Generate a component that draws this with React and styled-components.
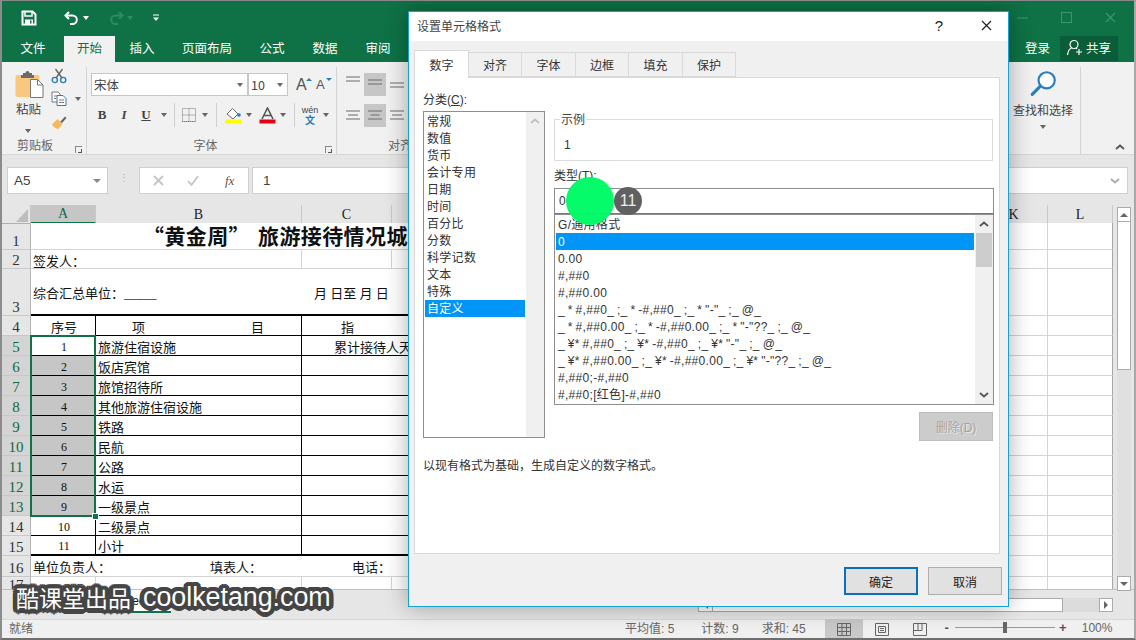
import React from 'react';
import styled, { createGlobalStyle } from 'styled-components';

const UI = '"Liberation Sans", "Noto Sans CJK SC", sans-serif';
const SHEET = '"Liberation Serif", "Noto Sans CJK SC", serif';
const GREEN = '#0e7246';
const LINE = '#d4d4d4';

const ring = Array.from({ length: 16 }, (_, i) => {
  const a = (i / 16) * Math.PI * 2;
  return `${(Math.cos(a) * 4.5).toFixed(2)}px ${(Math.sin(a) * 4.5).toFixed(2)}px 0.6px #454545, ${(Math.cos(a) * 2.5).toFixed(2)}px ${(Math.sin(a) * 2.5).toFixed(2)}px 0 #454545`;
}).join(', ');

const Global = createGlobalStyle`
  html, body { margin: 0; padding: 0; width: 1136px; height: 640px; overflow: hidden; background: #e6e6e6; }
  * { box-sizing: border-box; }
`;

const Frame = styled.div`
  position: relative; width: 1136px; height: 640px; overflow: hidden;
  display: flex; flex-direction: column;
  font: 12px ${UI}; color: #444; background: #e6e6e6;
  border-top: 1px solid #888; border-left: 2px solid #8c8c8c; border-right: 2px solid #a8a8a8; border-bottom: 2px solid #6f6f6f;
`;
const TitleBar = styled.div`
  height: 30px; background: ${GREEN}; display: flex; align-items: center; padding: 3px 0 0 19px; flex: none;
`;
const Qat = styled.div`
  display: flex; align-items: center; width: ${p => p.$w}px; color: ${p => p.$dim ? '#2f8a64' : '#fff'};
`;
const WindowButtons = styled.div`
  margin-left: auto; display: flex; align-items: center; gap: 33px; padding-right: 18px;
`;
const Tabs = styled.div`
  height: 31px; background: ${GREEN}; display: flex; align-items: flex-end; flex: none;
`;
const TabItem = styled.div`
  height: 26px; width: ${p => p.$w}px; margin-left: ${p => p.$ml || 0}px; display: flex; align-items: center; justify-content: center;
  font-size: 12.5px; color: ${p => p.$on ? GREEN : '#fff'}; background: ${p => p.$on ? '#f1f1f1' : 'transparent'}; flex: none; padding-bottom: 4px;
`;
const Login = styled.div`
  margin-left: auto; width: 60px; height: 26px; display: flex; align-items: center; color: #fff; font-size: 12.5px; padding: 0 0 4px 25px;
`;
const Share = styled.div`
  width: 58px; height: 25px; margin-right: 16px; background: #0a5d38; color: #fff; display: flex; align-items: center; gap: 3px;
  padding: 0 0 2px 6px; font-size: 12.5px; margin-bottom: 1px;
`;
const Ribbon = styled.div`
  height: 93px; background: #f1f1f1; display: flex; flex: none; border-bottom: 1px solid #d6d6d6; position: relative;
`;
const Group = styled.div`
  width: ${p => p.$w}px; flex: none; height: 87px; margin-top: 5px; border-right: ${p => p.$noline ? 'none' : '1px solid #d4d4d4'};
  display: flex; flex-direction: column; padding-left: ${p => p.$pl || 0}px; position: relative;
`;
const GroupBody = styled.div` height: 67px; display: flex; flex-direction: column; `;
const GroupLabel = styled.div`
  height: 20px; display: flex; align-items: center; justify-content: center; color: #666; font-size: 12px; padding-right: ${p => p.$pr || 0}px;
`;
const Launcher = styled.span`
  position: absolute; right: ${p => p.$r}px; bottom: 1px; width: 7px; height: 7px; border-left: 1px solid #888; border-top: 1px solid #888;
  &::after { content: ''; position: absolute; right: 0; bottom: 0; width: 3px; height: 3px; border-right: 1px solid #555; border-bottom: 1px solid #555; }
`;
const Caret = styled.span`
  display: inline-block; width: 0; height: 0; border-left: 3.5px solid transparent; border-right: 3.5px solid transparent;
  border-top: 4px solid #666; margin-left: ${p => p.$ml || 0}px; flex: none;
`;
const ClipRow = styled.div` display: flex; `;
const PasteCol = styled.div`
  width: 36px; margin-left: 13px; display: flex; flex-direction: column; align-items: flex-start; padding-top: 3px; font-size: 12.5px; color: #444;
`;
const PasteText = styled.div` margin-top: 2px; margin-left: 1px; line-height: 16px; `;
const PasteCaret = styled.div` margin: 4px 0 0 10px; `;
const ClipTools = styled.div` display: flex; flex-direction: column; gap: 2px; margin-top: -2px; `;
const ClipTool = styled.div` height: 21px; display: flex; align-items: center; `;
const FontTop = styled.div` display: flex; align-items: center; margin: 6px 0 0 4px; height: 23px; `;
const FontBox = styled.div`
  width: ${p => p.$w}px; height: 23px; background: #fff; border: 1px solid #c6c6c6; margin-left: ${p => p.$ml || 0}px; display: flex; align-items: center;
  justify-content: space-between; padding: 0 4px 0 2px; font-size: 12.5px; color: #444; flex: none;
  font-family: "Noto Sans CJK SC", sans-serif;
`;
const GrowA = styled.span`
  font: ${p => p.$s}px ${UI}; color: #555; margin-left: ${p => p.$ml}px; width: 13px; display: inline-block; line-height: 20px; position: relative;
  &::after {
    content: ''; position: absolute; right: -3px; top: 3px; width: 0; height: 0; border-left: 3px solid transparent; border-right: 3px solid transparent;
    ${p => p.$down ? 'border-top: 3px solid #2a7fb8;' : 'border-bottom: 3px solid #2a7fb8;'}
  }
`;
const FontBottom = styled.div` display: flex; align-items: center; margin: 7px 0 0 4px; height: 24px; `;
const Slot = styled.span`
  width: ${p => p.$w}px; flex: none; display: flex; align-items: center; justify-content: center;
`;
const StyleGlyph = styled.span`
  font: ${p => p.$i ? 'italic' : ''} bold 13px "Liberation Serif", serif; color: #444; ${p => p.$u && 'text-decoration: underline;'}
`;
const Sep = styled.span` width: 1px; height: 24px; background: #d0d0d0; flex: none; margin: 0 ${p => p.$m || 0}px; `;
const AlignRow = styled.div` display: flex; margin: ${p => p.$mt}px 0 0 3px; `;
const AlignCell = styled.div`
  width: 22px; height: 23px; margin-right: ${p => p.$mr || 0}px; background: ${p => p.$on ? '#c6c6c6' : 'transparent'}; display: flex;
  align-items: ${p => p.$v || 'center'}; justify-content: center; flex: none; padding: 3px 0;
`;
const AlignLabel = styled(GroupLabel)` padding-left: ${p => p.$offset}px; justify-content: flex-start; `;
const Spacer = styled.div` flex: 1; `;
const FindCol = styled.div`
  display: flex; flex-direction: column; align-items: center; padding: 3px 0 0 7px; font-size: 12px; color: #444; line-height: 16px; gap: 6px;
`;
const CollapseBtn = styled.div` position: absolute; right: 9px; bottom: 4px; color: #555; display: flex; `;

const FormulaRow = styled.div`
  height: 50px; flex: none; display: flex; align-items: flex-start; padding: 12px 0 0 5px; background: #e6e6e6;
`;
const NameBox = styled.div`
  width: 101px; height: 27px; background: #fff; border: 1px solid #d0d0d0; display: flex; align-items: center; justify-content: space-between;
  padding: 0 6px; font-size: 13.5px; color: #444; flex: none;
`;
const Dots = styled.div` width: 31px; text-align: center; color: #aaa; font-size: 10px; line-height: 5px; letter-spacing: 0; flex: none; padding-top: 8px; `;
const FxBox = styled.div`
  width: 110px; height: 27px; background: #fff; border: 1px solid #d0d0d0; display: flex; align-items: center; gap: 23px; padding-left: 13px; flex: none; color: #bbb;
`;
const Fx = styled.span` font: italic 13px "Liberation Serif", serif; color: #555; margin-left: 3px; `;
const FormulaInput = styled.div`
  width: 876px; height: 27px; background: #fff; border: 1px solid #d0d0d0; margin-left: 3px; display: flex; align-items: center; justify-content: space-between; padding: 0 7px 0 10px;
  font-size: 13.5px; color: #444; flex: none;
`;

const COLS = '29px 65px 206px 90px 588px 68px 65px';
const SheetArea = styled.div` position: relative; display: flex; flex: none; height: 384px; `;
const SheetMain = styled.div` width: 1111px; flex: none; position: relative; `;
const HeadRow = styled.div` display: grid; grid-template-columns: ${COLS}; height: 18px; `;
const Corner = styled.div`
  background: #e6e6e6; border-right: 1px solid #c8c8c8; border-bottom: 1px solid #b0b0b0; position: relative;
  &::after { content: ''; position: absolute; right: 2px; bottom: 1px; width: 0; height: 0; border-left: 12px solid transparent; border-bottom: 13px solid #bdbdbd; }
`;
const ColHead = styled.div`
  background: ${p => p.$sel ? '#c6c6c6' : '#e6e6e6'}; color: ${p => p.$sel ? '#0f6a42' : '#222'}; font: 14px ${SHEET}; display: flex; align-items: center; justify-content: center;
  border-right: 1px solid #c8c8c8; border-bottom: ${p => p.$sel ? `2px solid ${GREEN}` : '1px solid #a8a8a8'}; padding-top: 1px;
`;
const Row = styled.div` display: grid; grid-template-columns: ${COLS}; height: ${p => p.$h}px; `;
const RowHead = styled.div`
  background: ${p => p.$sel ? '#d4d4d4' : '#e6e6e6'}; color: ${p => p.$sel ? '#0f6a42' : '#333'}; font: 15px "Liberation Serif", serif;
  display: flex; align-items: flex-end; justify-content: center; border-right: 1px solid #b4b4b4; border-bottom: 1px solid #c8c8c8; line-height: 16px;
`;
const Cell = styled.div`
  grid-column: span ${p => p.$span || 1}; background: ${p => p.$sel ? '#c6c6c6' : '#fff'};
  border-right: ${p => p.$nr ? 'none' : `1px solid ${p.$black ? '#000' : LINE}`};
  border-bottom: ${p => p.$bb || 1}px solid ${p => p.$black || p.$bb ? '#000' : LINE};
  font: 13px/1 ${SHEET}; color: #111; display: flex; align-items: ${p => p.$end ? 'flex-end' : 'center'}; white-space: pre; padding-left: ${p => p.$pl ?? 2}px;
  justify-content: ${p => p.$c ? 'center' : 'flex-start'}; min-width: 0; padding-top: ${p => p.$end ? 0 : 3}px;
  ${p => p.$lr && 'border-right: 1px solid #a8a8a8;'}
`;
const Num = styled.span` font: 12px "Liberation Serif", serif; `;
const TitleText = styled.span` font: bold 21px/1 "Noto Sans CJK SC", sans-serif; color: #111; letter-spacing: .4px; margin-top: -4px; `;
const TitleRest = styled.span` margin-left: 8px; `;
const FarMark = styled.span` margin-left: ${p => p.$ml}px; `;
const FootLabel = styled.span` width: ${p => p.$w}px; flex: none; `;
const Selection = styled.div`
  position: absolute; left: 28px; top: 130px; width: 66px; height: 182px; border: 2px solid ${GREEN}; pointer-events: none;
  &::after { content: ''; position: absolute; right: -4px; bottom: -4px; width: 5px; height: 5px; background: ${GREEN}; border: 0; outline: 1px solid #fff; }
`;
const VScroll = styled.div`
  width: 14px; margin-left: 4px; flex: none; display: flex; flex-direction: column; height: 386px; padding-top: 2px; position: relative; z-index: 1;
`;
const ScrollBtn = styled.div`
  width: 14px; height: 15px; background: #fff; border: 1px solid #ababab; display: flex; align-items: center; justify-content: center; flex: none;
`;
const ArrowUp = styled.span` width: 0; height: 0; border-left: 4px solid transparent; border-right: 4px solid transparent; border-bottom: 4px solid #666; `;
const ArrowDown = styled.span` width: 0; height: 0; border-left: 4px solid transparent; border-right: 4px solid transparent; border-top: 4px solid #666; `;
const ArrowRight = styled.span` width: 0; height: 0; border-top: 4px solid transparent; border-bottom: 4px solid transparent; border-left: 4px solid #666; `;
const ArrowLeft = styled.span` width: 0; height: 0; border-top: 4px solid transparent; border-bottom: 4px solid transparent; border-right: 4px solid #666; `;
const VThumb = styled.div` height: 148px; background: #fff; border: 1px solid #ababab; border-top: none; flex: none; `;
const VTrack = styled.div` flex: 1; background: #e0e0e0; `;
const SheetTabs = styled.div`
  height: 30px; background: #e6e6e6; border-top: 1px solid #c0c0c0; display: flex; align-items: flex-start; flex: none; position: relative; margin-top: 0;
`;
const SheetTab = styled.div`
  margin-left: 100px; width: 69px; height: 23px; background: #fff; border-bottom: 2px solid ${GREEN}; color: #111; display: flex; align-items: center; justify-content: center; font-size: 12px;
`;
const HScroll = styled.div`
  margin-left: auto; margin-right: 21px; margin-top: 8px; display: flex; align-items: stretch; height: 14px; width: 415px;
`;
const HThumb = styled.div` width: 350px; background: #fff; border: 1px solid #ababab; border-left: none; `;
const HTrack = styled.div` flex: 1; background: #dcdcdc; `;
const HBtn = styled.div` width: ${p => p.$w}px; background: #fff; border: 1px solid #ababab; display: flex; align-items: center; justify-content: center; flex: none; `;
const StatusBar = styled.div`
  height: 19px; background: #f0f0f0; flex: none; display: flex; align-items: center; padding: 0 0 3px 7px; color: #666; font-size: 12px; border-top: 1px solid #d8d8d8;
`;
const StatText = styled.span` margin-left: ${p => p.$ml}px; flex: none; white-space: nowrap; font-size: 12px; color: #666; `;
const ViewBtn = styled.span`
  width: 38px; height: 21px; flex: none; display: flex; align-items: center; justify-content: center; background: ${p => p.$on ? '#c8c8c8' : 'transparent'};
  margin: 0 0 -3px ${p => p.$ml || 0}px;
`;
const ZoomTrack = styled.span`
  width: 100px; height: 1px; background: #999; margin: 0 4px; position: relative; flex: none;
  &::after { content: ''; position: absolute; left: 48px; top: -5px; width: 4px; height: 11px; background: #666; }
`;
const ZoomSign = styled.span` font: bold 13px ${UI}; color: #555; margin-left: ${p => p.$ml || 0}px; flex: none; width: 8px; text-align: center; `;

/* dialog */
const Dialog = styled.div`
  position: absolute; left: 406px; top: 10px; width: 601px; height: 596px; background: #f0f0f0; border: 1px solid #18a0d0;
  box-shadow: 0 0 22px rgba(0,0,0,.32); display: flex; flex-direction: column; color: #333; font: 12px ${UI};
`;
const DlgTitle = styled.div`
  height: 29px; background: #fff; display: flex; align-items: center; padding: 0 0 3px 8px; font-size: 12px; color: #444; flex: none;
`;
const DlgHelp = styled.span` margin-left: auto; font: 15px ${UI}; color: #222; margin-right: 38px; `;
const DlgClose = styled.span` margin-right: 16px; display: flex; `;
const DlgTabs = styled.div`
  display: flex; align-items: flex-end; height: 27px; margin: 9px 0 0 5px; flex: none; position: relative; z-index: 1;
`;
const DlgTab = styled.div`
  width: ${p => p.$w}px; height: ${p => p.$on ? 28 : 25}px; background: ${p => p.$on ? '#fff' : '#f0f0f0'}; border: 1px solid #d9d9d9; border-left: ${p => p.$on ? '1px solid #d9d9d9' : 'none'};
  border-bottom: ${p => p.$on ? 'none' : '1px solid #d9d9d9'}; display: flex; align-items: center; justify-content: center; color: #333; flex: none;
  margin-bottom: ${p => p.$on ? -1 : 0}px; font-size: 12px;
`;
const Panel = styled.div`
  margin-left: 5px; width: 586px; height: 477px; background: #fff; border: 1px solid #d9d9d9; padding: 13px 0 0 8px; flex: none;
  display: flex; flex-direction: column;
`;
const Columns = styled.div` display: flex; `;
const LeftCol = styled.div` width: 122px; flex: none; `;
const RightCol = styled.div` width: 440px; margin-left: 9px; flex: none; `;
const FieldLabel = styled.div` height: 20px; line-height: 18px; color: #333; font-size: 12px; `;
const ListBox = styled.div`
  border: 1px solid #8e8e8e; background: #fff; display: flex; height: ${p => p.$h}px; position: relative;
`;
const ListInner = styled.div` flex: 1; padding: 1px 1px 0 1px; min-width: 0; `;
const ListItem = styled.div`
  height: 17px; line-height: 19px; padding-left: 2px; white-space: pre; background: ${p => p.$on ? '#0095f6' : 'transparent'}; color: ${p => p.$on ? '#fff' : '#333'};
  font-size: 12px; letter-spacing: .3px; word-spacing: -.8px; overflow: hidden;
`;
const ListScroll = styled.div`
  width: 18px; background: #f0f0f0; flex: none; display: flex; flex-direction: column; align-items: center; position: relative;
`;
const ScrollChevron = styled.div` height: 18px; display: flex; align-items: center; justify-content: center; color: ${p => p.$dim ? '#c0c0c0' : '#555'}; flex: none; `;
const Thumb = styled.div` width: 16px; height: 34px; background: #cdcdcd; flex: none; `;
const Fill = styled.div` flex: 1; `;
const Sample = styled.fieldset`
  margin: 28px 0 0 0; padding: 10px 0 0 9px; height: 42px; border: 1px solid #dcdcdc; width: 439px; position: relative; display: flex; align-items: center;
`;
const SampleLegend = styled.span`
  position: absolute; left: 5px; top: -7px; background: #fff; padding: 0 1px; font-size: 12px; line-height: 14px; color: #444;
`;
const TypeLabel = styled.div` height: 27px; line-height: 14px; padding-top: 8px; color: #333; font-size: 12px; `;
const TypeInput = styled.div`
  height: 26px; border: 1px solid #8e8e8e; border-bottom: 1px solid #777; background: #fff; padding-left: 4px; display: flex; align-items: center; font-size: 12px; color: #333;
`;
const DeleteRow = styled.div` display: flex; justify-content: flex-end; margin-top: 7px; padding-right: 1px; `;
const DisabledBtn = styled.div`
  width: 74px; height: 29px; background: #cccccc; border: 1px solid #bdbdbd; color: #a4a4a4; display: flex; align-items: center; justify-content: center; font-size: 12px;
  text-shadow: 1px 1px 0 #e8e8e8;
`;
const Desc = styled.div` margin-top: 17px; line-height: 16px; color: #333; font-size: 12px; `;
const DlgButtons = styled.div` display: flex; justify-content: flex-end; gap: 10px; padding: 13px 6px 0 0; `;
const DlgButton = styled.div`
  width: 74px; height: 28px; background: #e1e1e1; border: ${p => p.$primary ? '2px solid #0a6fbd' : '1px solid #adadad'}; display: flex; align-items: center; justify-content: center; font-size: 12px; color: #222;
`;
const Spot = styled.div`
  position: absolute; left: 564px; top: 176px; width: 48px; height: 48px; border-radius: 50%; background: #00fb66; opacity: .98;
`;
const StepBadge = styled.div`
  position: absolute; left: 612px; top: 186px; width: 28px; height: 28px; border-radius: 50%; background: #606060; color: #eee; font: 16px/28px ${UI}; text-align: center;
`;
const Watermark = styled.div`
  position: absolute; left: 14px; top: 581px; display: flex; align-items: center; gap: 12px; color: #fff; white-space: nowrap;
  text-shadow: ${ring};
`;
const WatermarkCn = styled.span` font: 23px/30px "Noto Sans CJK SC", sans-serif; `;
const WatermarkEn = styled.span` font: 26.8px/30px ${UI}; `;

const Icon = ({ w = 16, h = 16, children, vb, ...rest }) => (
  <svg width={w} height={h} viewBox={vb || `0 0 ${w} ${h}`} fill="none" {...rest}>{children}</svg>
);
const Save = () => (
  <Icon w={16} h={16}><path d="M1.5 1.5h10l3 3v10h-13z" stroke="#fff" strokeWidth="2" /><path d="M4 2v4h7V2" stroke="#fff" strokeWidth="1.5" /><rect x="4" y="9.5" width="8" height="5" fill="#fff" /><rect x="9" y="10.5" width="1.5" height="3" fill={GREEN} /></Icon>
);
const Undo = ({ c }) => (
  <Icon w={16} h={16}><path d="M5 2 1.5 5.5 5 9" stroke={c} strokeWidth="2" /><path d="M2 5.5h6.5a4.3 4.3 0 0 1 0 8.6H6" stroke={c} strokeWidth="2" /></Icon>
);
const Redo = ({ c }) => (
  <Icon w={16} h={16}><path d="M11 2l3.5 3.5L11 9" stroke={c} strokeWidth="2" /><path d="M14 5.5H7.5a4.3 4.3 0 0 0 0 8.6H10" stroke={c} strokeWidth="2" /></Icon>
);
const QatCaret = () => (
  <Icon w={8} h={8}><path d="M1 1h6" stroke="#fff" /><path d="M1 3.5h6L4 7z" fill="#fff" /></Icon>
);
const Paste = () => (
  <Icon w={29} h={30}><rect x="0.5" y="5" width="24" height="22" rx="2" fill="#f9c77e" /><path d="M8 5V3h2.5a2 2 0 0 1 4 0H17v2h2v3H6V5z" fill="#6b6b6b" /><path d="M15.5 9.5h7l5.5 5.5v12.5H15.5z" fill="#fff" stroke="#777" /><path d="M22.5 10v5H28" stroke="#777" /></Icon>
);
const Cut = () => (
  <Icon w={16} h={16}><circle cx="3.8" cy="12" r="2.6" stroke="#2a7fb8" strokeWidth="1.4" /><circle cx="12.2" cy="12" r="2.6" stroke="#2a7fb8" strokeWidth="1.4" /><path d="M5 10 11.5 1M11 10 4.5 1" stroke="#666" strokeWidth="1.4" /></Icon>
);
const CopyIc = () => (
  <Icon w={16} h={15}><path d="M1 1h6l2 2v8H1z" fill="#fff" stroke="#777" /><path d="M6 4.5h6l3 3v7H6z" fill="#fff" stroke="#2a7fb8" /><path d="M3 5h3M8 9h5M8 11.5h5M3 7.5h2" stroke="#777" /></Icon>
);
const Painter = () => (
  <Icon w={16} h={16}><path d="M9 8 14 2.5l1.5 1.5L11 9z" fill="#666" /><path d="M1 10.5 6.5 5l5 5-4 5c-3-.5-5.5-2-6.5-4.5z" fill="#f4b860" /></Icon>
);
const Borders = () => (
  <Icon w={14} h={14}><path d="M.5.5h13v13H.5zM7 .5v13M.5 7h13" stroke="#777" strokeDasharray="1 1" /><path d="M0 13.5h14" stroke="#777" strokeDasharray="1 1" /></Icon>
);
const Bucket = () => (
  <Icon w={18} h={18}><path d="M3 8 8.5 2.5 14 8l-5 5z" fill="#fff" stroke="#666" /><circle cx="15" cy="9" r="1.8" fill="#2a7fb8" /><rect x="1" y="13.5" width="16" height="4" fill="#ffff00" /></Icon>
);
const ColorA = () => (
  <Icon w={17} h={17}><path d="M3 12 8.5 1 14 12M5 8.5h7" stroke="#555" strokeWidth="1.6" /><rect x="0.5" y="12.5" width="16" height="4" fill="#e60012" /></Icon>
);
const Wen = styled.span` display: flex; flex-direction: column; align-items: center; font: 9px/9px ${UI}; color: #444; `;
const WenChar = styled.span` color: #2a7fb8; font: bold 10px/10px "Noto Sans CJK SC", sans-serif; `;
const AlignIc = ({ widths = [14, 14, 14], c = '#6a6a6a' }) => (
  <Icon w={14} h={11}>{widths.map((w, i) => <rect key={i} x={(14 - w) / 2} y={i * 4 + .5} width={w} height="1" fill={c} />)}</Icon>
);
const Search = () => (
  <Icon w={27} h={27} vb="0 0 30 30"><circle cx="18.5" cy="11.5" r="9" stroke="#2a7fb8" strokeWidth="2.4" fill="#fff" /><path d="M11.5 18 2.5 27" stroke="#2a7fb8" strokeWidth="3.5" strokeLinecap="round" /></Icon>
);
const Person = () => (
  <Icon w={17} h={17}><circle cx="8" cy="5.5" r="4" stroke="#fff" strokeWidth="1.2" /><path d="M1.5 16c.5-4 2.5-6.5 4.5-7.2M10 9l1 1" stroke="#fff" strokeWidth="1.2" /><path d="M13 10v6M10 13h6" stroke="#fff" strokeWidth="1.2" /></Icon>
);
const Cross = ({ s = 12, c = '#222', sw = 1.2 }) => (
  <Icon w={s} h={s}><path d={`M1 1 ${s - 1} ${s - 1}M${s - 1} 1 1 ${s - 1}`} stroke={c} strokeWidth={sw} /></Icon>
);
const Chevron = ({ up, c = 'currentColor' }) => (
  <Icon w={10} h={6}><path d={up ? 'M1 5 5 1.5 9 5' : 'M1 1 5 4.5 9 1'} stroke={c} strokeWidth="1.8" /></Icon>
);
const GridIc = () => (
  <Icon w={14} h={13}><path d="M.5.5h13v12H.5zM.5 4.5h13M.5 8.5h13M5 .5v12M9.5.5v12" stroke="#666" /></Icon>
);
const PageIc = () => (
  <Icon w={14} h={13}><path d="M.5.5h13v12H.5zM3.5 3.5h7v6h-7zM5 5.5h4M5 7.5h4" stroke="#666" /></Icon>
);
const BreakIc = () => (
  <Icon w={14} h={13}><path d="M.5.5h13v12H.5zM5 .5v7h4V.5M.5 7.5H5" stroke="#666" /></Icon>
);

const tabs = [['开始', 51], ['插入', 54], ['页面布局', 76], ['公式', 54], ['数据', 52], ['审阅', 54]];
const labels = ['常规', '数值', '货币', '会计专用', '日期', '时间', '百分比', '分数', '科学记数', '文本', '特殊', '自定义'];
const formats = [
  'G/通用格式', '0', '0.00', '#,##0', '#,##0.00',
  '_ * #,##0_ ;_ * -#,##0_ ;_ * "-"_ ;_ @_',
  '_ * #,##0.00_ ;_ * -#,##0.00_ ;_ * "-"??_ ;_ @_',
  '_ ¥* #,##0_ ;_ ¥* -#,##0_ ;_ ¥* "-"_ ;_ @_',
  '_ ¥* #,##0.00_ ;_ ¥* -#,##0.00_ ;_ ¥* "-"??_ ;_ @_',
  '#,##0;-#,##0', '#,##0;[红色]-#,##0',
];
const items = ['旅游住宿设施', '饭店宾馆', '旅馆招待所', '其他旅游住宿设施', '铁路', '民航', '公路', '水运', '一级景点', '二级景点', '小计'];
const dlgTabs = [['数字', 55, true], ['对齐', 53], ['字体', 54], ['边框', 53], ['填充', 54], ['保护', 53]];
const colHeads = ['A', 'B', 'C', '', 'K', 'L'];

function Sheet() {
  return (
    <SheetMain>
      <HeadRow>
        <Corner />
        {colHeads.map((c, i) => <ColHead key={i} $sel={c === 'A'}>{c}</ColHead>)}
      </HeadRow>
      <Row $h={27}>
        <RowHead>1</RowHead>
        <Cell $span={4} $pl={112} $nr><TitleText lang="zh-CN">“黄金周”<TitleRest>旅游接待情况城市汇总表</TitleRest></TitleText></Cell>
        <Cell />
        <Cell $lr />
      </Row>
      <Row $h={19}>
        <RowHead>2</RowHead>
        <Cell $span={2} $end>签发人：</Cell>
        <Cell /><Cell /><Cell /><Cell $lr />
      </Row>
      <Row $h={47}>
        <RowHead>3</RowHead>
        <Cell $span={2} $nr $bb={2} $black>综合汇总单位：_____</Cell>
        <Cell $span={2} $bb={2} $nr $black $pl={12}>月 日至 月 日</Cell>
        <Cell />
        <Cell $lr />
      </Row>
      <Row $h={20}>
        <RowHead>4</RowHead>
        <Cell $black $c>序号</Cell>
        <Cell $black $pl={36}>项<FarMark $ml={106}>目</FarMark></Cell>
        <Cell $black $span={2} $pl={39} $nr>指</Cell>
        <Cell /><Cell $lr />
      </Row>
      {items.map((t, i) => {
        const n = i + 1;
        const sel = n <= 9;
        const last = n === 11;
        return (
          <Row $h={20} key={n}>
            <RowHead $sel={sel}>{n + 4}</RowHead>
            <Cell $black $c $sel={sel && n > 1} $bb={last ? 2 : 1}><Num>{n}</Num></Cell>
            <Cell $black $bb={last ? 2 : 1}>{t}</Cell>
            <Cell $black $span={2} $nr $bb={last ? 2 : 1} $pl={32}>{n === 1 ? '累计接待人天' : ''}</Cell>
            <Cell /><Cell $lr />
          </Row>
        );
      })}
      <Row $h={21}>
        <RowHead>16</RowHead>
        <Cell $span={3} $nr><FootLabel $w={177}>单位负责人：</FootLabel><FootLabel $w={142}>填表人：</FootLabel>电话：</Cell>
        <Cell /><Cell /><Cell $lr />
      </Row>
      <Row $h={12}>
        <RowHead>17</RowHead>
        <Cell /><Cell /><Cell /><Cell /><Cell /><Cell $lr />
      </Row>
      <Selection />
    </SheetMain>
  );
}

function FormatDialog() {
  return (
    <Dialog>
      <DlgTitle>
        设置单元格格式
        <DlgHelp>?</DlgHelp>
        <DlgClose><Cross s={11} /></DlgClose>
      </DlgTitle>
      <DlgTabs>
        {dlgTabs.map(([t, w, on]) => <DlgTab key={t} $w={w} $on={on}>{t}</DlgTab>)}
      </DlgTabs>
      <Panel>
        <Columns>
          <LeftCol>
            <FieldLabel>分类(<u>C</u>):</FieldLabel>
            <ListBox $h={327}>
              <ListInner>
                {labels.map(l => <ListItem key={l} $on={l === '自定义'}>{l}</ListItem>)}
              </ListInner>
              <ListScroll><ScrollChevron $dim><Chevron up /></ScrollChevron></ListScroll>
            </ListBox>
          </LeftCol>
          <RightCol>
            <Sample>
              <SampleLegend>示例</SampleLegend>
              1
            </Sample>
            <TypeLabel>类型(<u>T</u>):</TypeLabel>
            <TypeInput>0</TypeInput>
            <ListBox $h={191}>
              <ListInner>
                {formats.map(f => <ListItem key={f} $on={f === '0'}>{f}</ListItem>)}
              </ListInner>
              <ListScroll>
                <ScrollChevron><Chevron up /></ScrollChevron>
                <Thumb />
                <Fill />
                <ScrollChevron><Chevron /></ScrollChevron>
              </ListScroll>
            </ListBox>
            <DeleteRow><DisabledBtn>删除(D)</DisabledBtn></DeleteRow>
          </RightCol>
        </Columns>
        <Desc>以现有格式为基础，生成自定义的数字格式。</Desc>
      </Panel>
      <DlgButtons>
        <DlgButton $primary>确定</DlgButton>
        <DlgButton>取消</DlgButton>
      </DlgButtons>
    </Dialog>
  );
}

export default function App() {
  return (
    <>
      <Global />
      <Frame>
        <TitleBar>
          <Qat $w={43}><Save /></Qat>
          <Qat $w={44}><Undo c="#fff" /><Caret $ml={3} style={{ borderTopColor: '#fff' }} /></Qat>
          <Qat $w={44}><Redo c="#2f8a64" /><Caret $ml={3} style={{ borderTopColor: '#2f8a64' }} /></Qat>
          <Qat $w={20}><QatCaret /></Qat>
          <WindowButtons>
            <Icon w={11} h={11}><path d="M0 6h11" stroke="#3d9470" /></Icon>
            <Icon w={11} h={11}><rect x=".5" y=".5" width="10" height="10" stroke="#3d9470" /></Icon>
            <Cross s={11} c="#3d9470" />
          </WindowButtons>
        </TitleBar>
        <Tabs>
          <TabItem $w={62}>文件</TabItem>
          {tabs.map(([t, w]) => <TabItem key={t} $w={w} $on={t === '开始'}>{t}</TabItem>)}
          <Login>登录</Login>
          <Share><Person />共享</Share>
        </Tabs>
        <Ribbon>
          <Group $w={85}>
            <GroupBody>
              <ClipRow>
                <PasteCol>
                  <Paste />
                  <PasteText>粘贴</PasteText>
                  <PasteCaret><Caret /></PasteCaret>
                </PasteCol>
                <ClipTools>
                  <ClipTool><Cut /></ClipTool>
                  <ClipTool><CopyIc /><Caret $ml={8} /></ClipTool>
                  <ClipTool><Painter /></ClipTool>
                </ClipTools>
              </ClipRow>
            </GroupBody>
            <GroupLabel $pr={18}>剪贴板</GroupLabel>
            <Launcher $r={4} />
          </Group>
          <Group $w={250}>
            <GroupBody>
              <FontTop>
                <FontBox $w={157}>宋体<Caret /></FontBox>
                <FontBox $w={40}>10<Caret /></FontBox>
                <GrowA $s={16} $ml={8}>A</GrowA>
                <GrowA $s={13} $ml={7} $down>A</GrowA>
              </FontTop>
              <FontBottom>
                <Slot $w={22}><StyleGlyph>B</StyleGlyph></Slot>
                <Slot $w={22}><StyleGlyph $i>I</StyleGlyph></Slot>
                <Slot $w={22}><StyleGlyph $u>U</StyleGlyph></Slot>
                <Slot $w={14}><Caret /></Slot>
                <Sep $m={3} />
                <Slot $w={22}><Borders /></Slot>
                <Slot $w={10}><Caret /></Slot>
                <Sep $m={6} />
                <Slot $w={20}><Bucket /></Slot>
                <Slot $w={12}><Caret /></Slot>
                <Slot $w={24}><ColorA /></Slot>
                <Slot $w={8}><Caret /></Slot>
                <Sep $m={7} />
                <Slot $w={16}><Wen>wén<WenChar>文</WenChar></Wen></Slot>
                <Slot $w={16}><Caret /></Slot>
              </FontBottom>
            </GroupBody>
            <GroupLabel $pr={12}>字体</GroupLabel>
            <Launcher $r={4} />
          </Group>
          <Group $w={150} $noline $pl={2}>
            <GroupBody>
              <AlignRow $mt={6}>
                <AlignCell $v="flex-start"><AlignIc widths={[14, 14]} /></AlignCell>
                <AlignCell $on><AlignIc widths={[14, 14]} /></AlignCell>
                <AlignCell $v="flex-end"><AlignIc widths={[14, 14]} /></AlignCell>
              </AlignRow>
              <AlignRow $mt={8}>
                <AlignCell><AlignIc widths={[14, 10, 14]} /></AlignCell>
                <AlignCell $on><AlignIc widths={[14, 9, 14]} /></AlignCell>
                <AlignCell><AlignIc widths={[14, 10, 14]} /></AlignCell>
              </AlignRow>
            </GroupBody>
            <AlignLabel $offset={49}>对齐方式</AlignLabel>
          </Group>
          <Spacer />
          <Group $w={82}>
            <GroupBody>
              <FindCol>
                <Search />
                查找和选择
                <Caret />
              </FindCol>
            </GroupBody>
          </Group>
          <Group $w={53} $noline />
          <CollapseBtn><Chevron up c="#555" /></CollapseBtn>
        </Ribbon>
        <FormulaRow>
          <NameBox>A5<Caret style={{ borderTopColor: '#888', borderLeftWidth: 4, borderRightWidth: 4 }} /></NameBox>
          <Dots>⋮</Dots>
          <FxBox>
            <Cross s={11} c="#c4c4c4" sw={1.8} />
            <Icon w={12} h={11}><path d="M1 6l3.5 4L11 1" stroke="#c4c4c4" strokeWidth="1.8" /></Icon>
            <Fx>fx</Fx>
          </FxBox>
          <FormulaInput>1<Chevron c="#aaa" /></FormulaInput>
        </FormulaRow>
        <SheetArea>
          <Sheet />
          <VScroll>
            <ScrollBtn><ArrowUp /></ScrollBtn>
            <VThumb />
            <VTrack />
            <ScrollBtn><ArrowDown /></ScrollBtn>
          </VScroll>
        </SheetArea>
        <SheetTabs>
          <SheetTab>Sheet1</SheetTab>
          <HScroll>
            <HBtn $w={15}><ArrowLeft /></HBtn>
            <HThumb />
            <HTrack />
            <HBtn $w={14}><ArrowRight /></HBtn>
          </HScroll>
        </SheetTabs>
        <StatusBar>
          就绪
          <StatText $ml={592}>平均值: 5</StatText>
          <StatText $ml={27}>计数: 9</StatText>
          <StatText $ml={23}>求和: 45</StatText>
          <ViewBtn $on $ml={19}><GridIc /></ViewBtn>
          <ViewBtn><PageIc /></ViewBtn>
          <ViewBtn><BreakIc /></ViewBtn>
          <ZoomSign $ml={4}>-</ZoomSign>
          <ZoomTrack />
          <ZoomSign>+</ZoomSign>
          <StatText $ml={15}>100%</StatText>
        </StatusBar>
        <FormatDialog />
        <Spot />
        <StepBadge>11</StepBadge>
        <Watermark>
          <WatermarkCn>酷课堂出品</WatermarkCn>
          <WatermarkEn>coolketang.com</WatermarkEn>
        </Watermark>
      </Frame>
    </>
  );
}
